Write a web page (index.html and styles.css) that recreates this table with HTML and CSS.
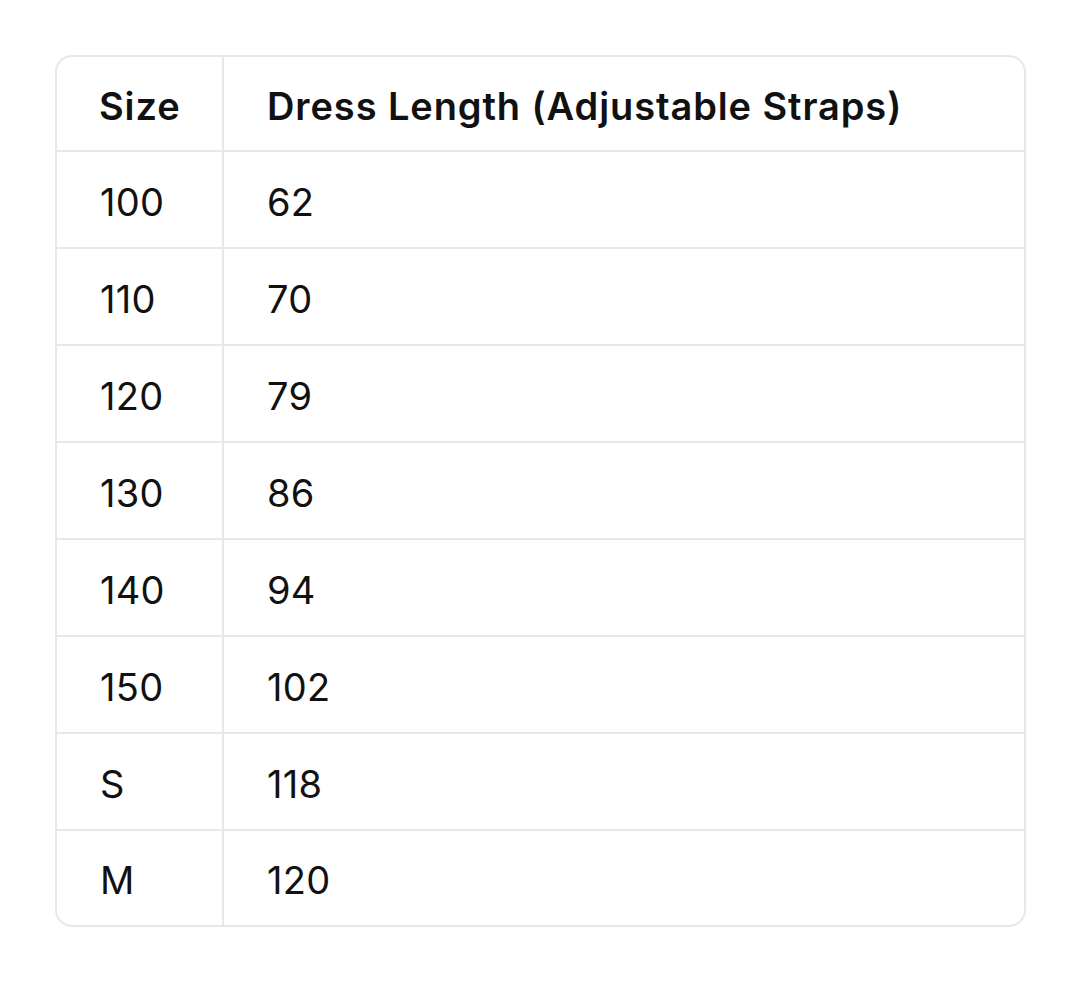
FILE: index.html
```html
<!DOCTYPE html>
<html lang="en">
<head>
<meta charset="utf-8">
<title>Size Chart</title>
<link rel="stylesheet" href="styles.css">
</head>
<body>
<div class="page">
  <div class="card">
    <table class="chart">
      <thead>
        <tr><th class="c1">Size</th><th class="c2">Dress Length (Adjustable Straps)</th></tr>
      </thead>
      <tbody>
        <tr><td class="c1">100</td><td class="c2">62</td></tr>
        <tr><td class="c1">110</td><td class="c2">70</td></tr>
        <tr><td class="c1">120</td><td class="c2">79</td></tr>
        <tr><td class="c1">130</td><td class="c2">86</td></tr>
        <tr><td class="c1">140</td><td class="c2">94</td></tr>
        <tr><td class="c1">150</td><td class="c2">102</td></tr>
        <tr><td class="c1">S</td><td class="c2">118</td></tr>
        <tr><td class="c1">M</td><td class="c2">120</td></tr>
      </tbody>
    </table>
  </div>
</div>
</body>
</html>
```
FILE: styles.css
```css
html, body {
  margin: 0;
  padding: 0;
  background: #ffffff;
}
body {
  font-family: Inter, "Liberation Sans", Arial, sans-serif;
  color: #111111;
  width: 1080px;
  height: 995px;
}
.page {
  padding: 55px 54px 0 55px;
}
.card {
  width: 971px;
  border: 2px solid #e8e8e8;
  border-radius: 17px;
  overflow: hidden;
  box-sizing: border-box;
}
.chart {
  width: 100%;
  border-collapse: collapse;
  table-layout: fixed;
}
.chart th, .chart td {
  padding: 4px 0 0 0;
  text-align: left;
  font-size: 38px;
  line-height: 1;
  vertical-align: middle;
  box-sizing: border-box;
  height: 97px;
}
.chart th {
  font-weight: 600;
  letter-spacing: 0.9px;
  height: 94px;
}
.chart td {
  font-weight: 400;
  letter-spacing: 0.3px;
}
.chart tbody tr:last-child td {
  height: 95px;
}
.chart tbody tr td {
  border-top: 2px solid #e8e8e8;
}
.chart .c1 {
  width: 166px;
  padding-left: 42px;
  border-right: 2px solid #e8e8e8;
}
.chart td.c1 {
  padding-left: 43px;
}
.chart .c2 {
  padding-left: 43px;
}
```
